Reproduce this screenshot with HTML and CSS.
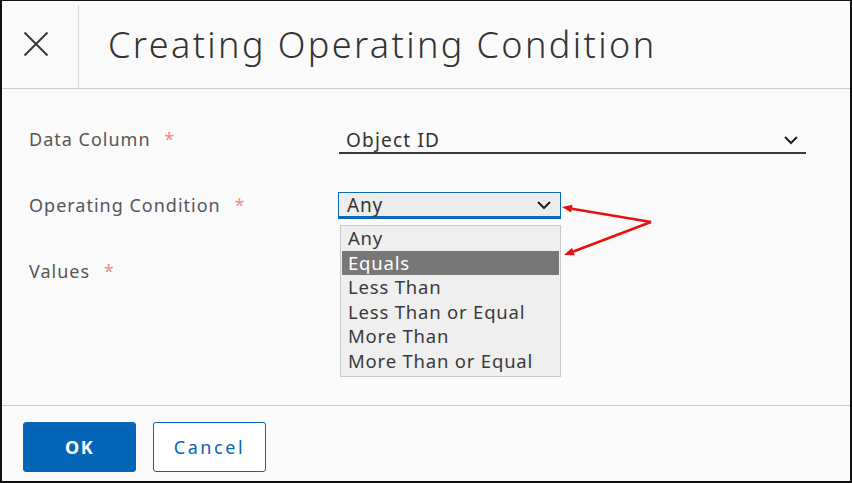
FILE: index.html
```html
<!DOCTYPE html>
<html>
<head>
<meta charset="utf-8">
<link rel="stylesheet" href="styles.css">
</head>
<body>
<div class="frame">
  <header class="head">
    <div class="close">
      <svg width="26" height="26" viewBox="0 0 26 26"><path d="M1.5 1.5 L24.5 24.5 M24.5 1.5 L1.5 24.5" stroke="#333" stroke-width="1.8" fill="none"/></svg>
    </div>
    <h1 class="title">Creating Operating Condition</h1>
  </header>
  <main class="body">
    <div class="row">
      <label class="lbl">Data Column <span class="req">*</span></label>
      <div class="select underline">
        <span>Object ID</span>
        <svg class="chev" width="14" height="9" viewBox="0 0 14 9"><path d="M1 1 L7 7 L13 1" stroke="#222" stroke-width="2" fill="none"/></svg>
      </div>
    </div>
    <div class="row">
      <label class="lbl">Operating Condition <span class="req">*</span></label>
      <div class="select boxed">
        <span>Any</span>
        <svg class="chev" width="14" height="9" viewBox="0 0 14 9"><path d="M1 1 L7 7 L13 1" stroke="#222" stroke-width="2" fill="none"/></svg>
      </div>
    </div>
    <div class="row">
      <label class="lbl">Values <span class="req">*</span></label>
      <div class="valinput"></div>
    </div>
    <ul class="menu">
      <li>Any</li>
      <li class="sel">Equals</li>
      <li>Less Than</li>
      <li>Less Than or Equal</li>
      <li>More Than</li>
      <li>More Than or Equal</li>
    </ul>
    <svg class="arrows" width="100" height="70" viewBox="0 0 100 70">
      <path d="M95 27 L15.9 13.7" stroke="#e81010" stroke-width="2.5" fill="none"/>
      <path d="M95 27 L17.4 56.5" stroke="#e81010" stroke-width="2.5" fill="none"/>
      <path d="M6 12 L15.2 17.6 L16.5 9.7 Z" fill="#e81010"/>
      <path d="M8 60 L18.8 60.2 L16 52.8 Z" fill="#e81010"/>
    </svg>
  </main>
  <footer class="foot">
    <button class="btn primary">OK</button>
    <button class="btn outline">Cancel</button>
  </footer>
</div>
</body>
</html>
```
FILE: styles.css
```css
* { box-sizing: border-box; }
html, body { margin: 0; padding: 0; }
body {
  width: 852px;
  height: 483px;
  background: #fff;
  font-family: "Noto Sans", "DejaVu Sans", sans-serif;
  color: #565656;
}
.frame {
  width: 852px;
  height: 483px;
  background: #fafafa;
  border: 2px solid #111;
  border-top-width: 1px;
  display: flex;
  flex-direction: column;
}
.head {
  height: 88px;
  border-bottom: 1px solid #cfcfcf;
  display: flex;
  align-items: stretch;
  flex: none;
}
.close {
  width: 77px;
  border-right: 1px solid #d8d8d8;
  display: flex;
  align-items: center;
  justify-content: flex-start;
  padding-left: 21px;
  margin-top: 4px;
  padding-bottom: 6px;
}
.title {
  margin: 0;
  padding-left: 29px;
  font-weight: 300;
  font-size: 36px;
  color: #333;
  display: flex;
  align-items: center;
  letter-spacing: 2.4px;
}
.body {
  flex: 1;
  position: relative;
  padding: 17px 0 0 27px;
}
.row {
  display: flex;
  align-items: center;
  height: 66px;
}
.lbl {
  width: 310px;
  font-size: 18px;
  letter-spacing: 1px;
}
.req { color: #f48a8a; margin-left: 8px; }
.select {
  display: flex;
  align-items: center;
  justify-content: space-between;
  font-size: 19px;
  color: #333;
}
.underline {
  width: 467px;
  margin-left: 0;
  height: 30px;
  padding: 4px 8px 0 7px;
  border-bottom: 2px solid #3a3a3a;
  letter-spacing: 1.2px;
}
.boxed {
  width: 223px;
  margin-left: -1px;
  height: 27px;
  padding: 2px 9px 0 8px;
  background: #ededed;
  border: 1px solid #0b69b9;
  border-bottom: 3px solid #0b69b9;
  letter-spacing: 0.8px;
}
.valinput {
  width: 2px;
  height: 32px;
  margin-left: 1px;
  background: #1c3f7a;
}
.menu {
  position: absolute;
  left: 338px;
  top: 136px;
  width: 221px;
  margin: 0;
  padding: 0 1px 2px 1px;
  list-style: none;
  background: #efefef;
  border: 1px solid #c9c9c9;
  font-size: 18.5px;
  color: #3a3a3a;
}
.menu li {
  height: 24.6px;
  line-height: 24.6px;
  padding-left: 6px;
  letter-spacing: 0.8px;
}
.menu li.sel {
  background: #777;
  color: #fff;
}
.arrows {
  position: absolute;
  left: 554px;
  top: 106px;
}
.foot {
  height: 76px;
  border-top: 1px solid #c8c8c8;
  display: flex;
  align-items: flex-start;
  padding: 16px 0 0 21px;
  gap: 17px;
  flex: none;
}
.btn {
  width: 113px;
  height: 50px;
  border-radius: 3px;
  font-family: inherit;
  font-size: 18px;
  letter-spacing: 1.5px;
}
.primary {
  background: #0565b6;
  border: 1px solid #0565b6;
  color: #fff;
  font-weight: 700;
}
.outline {
  background: #fff;
  border: 1px solid #0565b6;
  color: #0565b6;
  letter-spacing: 2.6px;
}
```
